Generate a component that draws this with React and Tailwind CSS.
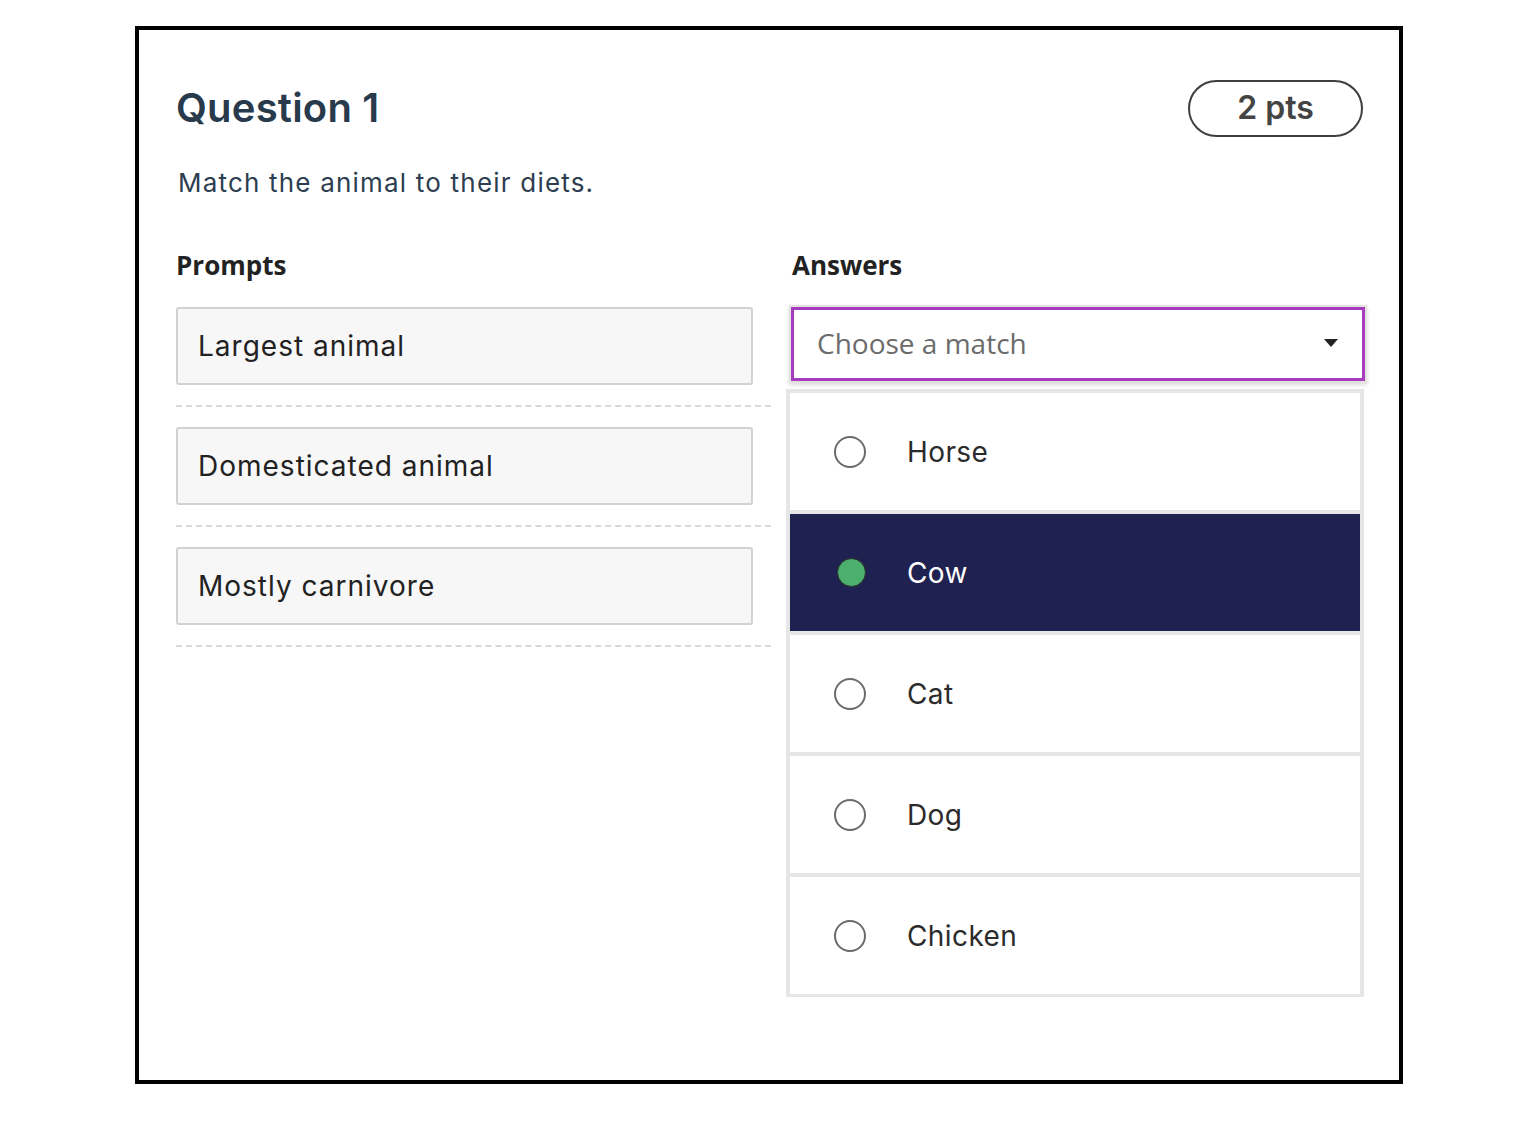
import React from "react";

const prompts = ["Largest animal", "Domesticated animal", "Mostly carnivore"];
const answers = ["Horse", "Cow", "Cat", "Dog", "Chicken"];

const poppins = { fontFamily: "Inter, 'Noto Sans', sans-serif" };

function PromptBox({ label }) {
  return (
    <div>
      <div className="flex h-[78px] w-[577px] items-center rounded-[3px] border-2 border-[#d2d2d2] bg-[#f7f7f7] pl-[20px] text-[28px] tracking-[1px] text-[#222]">
        {label}
      </div>
      <div className="mt-[20px] mb-[20px] border-t-2 border-dashed border-[#d9d9d9]" />
    </div>
  );
}

function AnswerItem({ label, selected }) {
  return (
    <div
      className={
        "flex h-[117px] items-center pl-[44px] " +
        (selected ? "bg-[#1f2251] text-white" : "bg-white text-[#2b2b2b]")
      }
    >
      {selected ? (
        <span className="ml-[3px] h-[29px] w-[29px] rounded-full border border-[#2a2a2a] bg-[#4caf6e]" />
      ) : (
        <span className="h-[32px] w-[32px] rounded-full border-2 border-[#6b6b6b]" />
      )}
      <span className="ml-[41px] text-[28px] tracking-[0.4px]">{label}</span>
    </div>
  );
}

export default function App() {
  return (
    <div className="h-[1131px] w-full bg-white pt-[26px] pl-[135px]" style={poppins}>
      <div className="h-[1058px] w-[1268px] border-4 border-black pl-[37px] pr-[36px] pt-[48px]">
        <div className="flex items-center justify-between">
          <h1 className="text-[40px] font-semibold tracking-[0.2px] text-[#283a4b]">Question 1</h1>
          <div className="flex h-[57px] w-[175px] items-center justify-center rounded-full border-2 border-[#3f3f3f] text-[32px] font-semibold text-[#444]">
            2 pts
          </div>
        </div>

        <p className="mt-[27px] ml-[2px] text-[26px] leading-[36px] tracking-[1.2px] text-[#2c3e50]">
          Match the animal to their diets.
        </p>

        <div className="mt-[46px] flex gap-[15px]">
          <div className="w-[595px] shrink-0">
            <div
              className="text-[26px] font-bold leading-[36px] text-[#222]"
              style={{ fontFamily: "'Open Sans', sans-serif" }}
            >
              Prompts
            </div>
            <div className="mt-[24px]">
              {prompts.map((p) => (
                <PromptBox key={p} label={p} />
              ))}
            </div>
          </div>

          <div className="w-[581px] shrink-0">
            <div
              className="ml-[6px] text-[26px] font-bold leading-[36px] text-[#222]"
              style={{ fontFamily: "'Open Sans', sans-serif" }}
            >
              Answers
            </div>
            <div className="mt-[22px] ml-[3px] w-[578px] border-2 border-[#e2e2e2] shadow-[0_2px_4px_rgba(0,0,0,0.15)]">
              <div className="flex h-[74px] items-center justify-between border-[3px] border-[#a83cbf] bg-white pb-[3px] pl-[23px] pr-[24px]">
                <span
                  className="text-[28px] text-[#6b6b6b]"
                  style={{ fontFamily: "'Open Sans', sans-serif" }}
                >
                  Choose a match
                </span>
                <svg width="14" height="8" viewBox="0 0 14 8">
                  <path d="M0 0 L14 0 L7 8 Z" fill="#222" />
                </svg>
              </div>
            </div>

            <div className="mt-[6px] flex w-[578px] flex-col gap-[4px] bg-[#e6e6e6] px-[4px] pt-[4px] pb-[3px]">
              {answers.map((a) => (
                <AnswerItem key={a} label={a} selected={a === "Cow"} />
              ))}
            </div>
          </div>
        </div>
      </div>
    </div>
  );
}
